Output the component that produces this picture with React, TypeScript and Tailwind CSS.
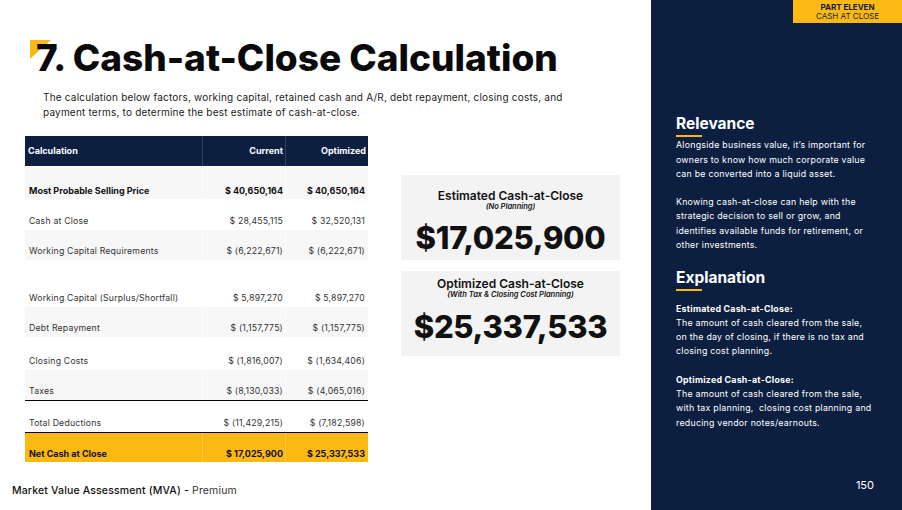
import React from "react";

const NAVY = "bg-[#0c1f40]";

type Row = {
  label: string;
  cur: string;
  opt: string;
  h: string;
  bg: "grey" | "white" | "yellow";
  bold?: boolean;
  top?: boolean;
};

const rows: Row[] = [
  { label: "Most Probable Selling Price", cur: "$ 40,650,164", opt: "$ 40,650,164", h: "h-[32px]", bg: "grey", bold: true },
  { label: "Cash at Close", cur: "$ 28,455,115", opt: "$ 32,520,131", h: "h-[31px]", bg: "white" },
  { label: "Working Capital Requirements", cur: "$ (6,222,671)", opt: "$ (6,222,671)", h: "h-[30px]", bg: "grey" },
  { label: "Working Capital (Surplus/Shortfall)", cur: "$ 5,897,270", opt: "$ 5,897,270", h: "h-[47px]", bg: "white" },
  { label: "Debt Repayment", cur: "$ (1,157,775)", opt: "$ (1,157,775)", h: "h-[30px]", bg: "grey" },
  { label: "Closing Costs", cur: "$ (1,816,007)", opt: "$ (1,634,406)", h: "h-[33px]", bg: "white" },
  { label: "Taxes", cur: "$ (8,130,033)", opt: "$ (4,065,016)", h: "h-[30px]", bg: "grey" },
  { label: "Total Deductions", cur: "$ (11,429,215)", opt: "$ (7,182,598)", h: "h-[32px]", bg: "white", top: true },
  { label: "Net Cash at Close", cur: "$ 17,025,900", opt: "$ 25,337,533", h: "h-[30px]", bg: "yellow", bold: true, top: true },
];

function TableRow({ r }: { r: Row }) {
  const bg =
    r.bg === "grey" ? "bg-[#f7f7f7]" : r.bg === "yellow" ? "bg-[#fdb913]" : "bg-white";
  const sep =
    r.bg === "yellow" ? "border-l border-[#fdc94a]" : r.bg === "grey" ? "border-l border-[#fcfcfc]" : "";
  const weight = r.bold
    ? "font-bold text-[9px] text-[#111]"
    : "font-normal text-[8.7px] tracking-[0.2px] text-[#333]";
  return (
    <div
      className={`grid grid-cols-[177px_83px_83px] ${r.h} ${bg} ${r.top ? "border-t-[1.5px] border-black" : ""} ${weight}`}
    >
      <div className="flex items-end pb-[2px] pl-[4px]">{r.label}</div>
      <div className={`flex items-end justify-end pb-[2px] pr-[2px] ${sep}`}>{r.cur}</div>
      <div className={`flex items-end justify-end pb-[2px] pr-[3px] ${sep}`}>{r.opt}</div>
    </div>
  );
}

function Card({ title, sub, value, pt, vmt }: { title: string; sub: string; value: string; pt: string; vmt: string }) {
  return (
    <div className={`w-[219px] h-[85px] bg-[#f3f3f3] flex flex-col items-center ${pt} text-[#111]`}>
      <div className="text-[12px] font-semibold leading-[13px]">{title}</div>
      <div className="text-[7.5px] font-semibold italic leading-[10px]">{sub}</div>
      <div className={`text-[31px] font-extrabold leading-[36px] ${vmt} tracking-[-0.3px]`}>{value}</div>
    </div>
  );
}

export default function App() {
  return (
    <div className="w-[902px] h-[510px] flex bg-white overflow-hidden font-['Inter',sans-serif]">
      {/* Left content */}
      <div className="w-[651px] h-full flex flex-col relative">
        <div className="relative mt-[38px] ml-[30px] h-[40px]">
          <svg className="absolute left-0 top-[2px]" width="24" height="22" viewBox="0 0 24 22">
            <polygon points="0,0 21,0 0,19" fill="#fdb913" />
          </svg>
          <h1 className="relative pl-[6px] text-[37px] leading-[40px] font-extrabold text-[#0a0a0a] tracking-[0px]">
            7. Cash-at-Close Calculation
          </h1>
        </div>
        <p className="ml-[43px] mt-[12px] text-[10px] tracking-[0.2px] leading-[15px] text-[#222] w-[600px]">
          The calculation below factors, working capital, retained cash and A/R, debt repayment, closing costs, and
          <br />
          payment terms, to determine the best estimate of cash-at-close.
        </p>
        <div className="flex mt-[16px] ml-[25px]">
          {/* Table */}
          <div className="w-[343px] flex flex-col">
            <div className={`grid grid-cols-[177px_83px_83px] h-[30px] ${NAVY} text-white text-[9px] font-bold mb-[1px]`}>
              <div className="flex items-center pl-[3px]">Calculation</div>
              <div className="flex items-center justify-end pr-[2px] border-l border-[#2c3d5e]">Current</div>
              <div className="flex items-center justify-end pr-[2px] border-l border-[#2c3d5e]">Optimized</div>
            </div>
            {rows.map((r) => (
              <TableRow key={r.label} r={r} />
            ))}
          </div>
          {/* Cards */}
          <div className="ml-[33px] mt-[39px] flex flex-col gap-[11px]">
            <Card title="Estimated Cash-at-Close" sub="(No Planning)" value="$17,025,900" pt="pt-[14px]" vmt="mt-[8px]" />
            <Card title="Optimized Cash-at-Close" sub="(With Tax & Closing Cost Planning)" value="$25,337,533" pt="pt-[6px]" vmt="mt-[9px]" />
          </div>
        </div>
        <div className="mt-auto mb-[11px] ml-[12px] text-[10.5px] tracking-[0.15px] text-[#111]">
          <span className="font-medium">Market Value Assessment (MVA) -</span>{" "}
          <span className="font-normal text-[#333]">Premium</span>
        </div>
      </div>

      {/* Right panel */}
      <div className={`w-[251px] h-full ${NAVY} flex flex-col relative`}>
        <div className="self-end w-[109px] h-[23px] bg-[#fdb913] flex flex-col items-center justify-center text-[8px] leading-[9px] text-[#0c1f40]">
          <div className="font-bold">PART ELEVEN</div>
          <div className="font-normal">CASH AT CLOSE</div>
        </div>
        <div className="pl-[25px] pr-[28px] mt-[91px] text-white">
          <h2 className="text-[15.5px] font-bold leading-[20px]">Relevance</h2>
          <div className="w-[26px] h-[2px] bg-[#fdb913] mt-[1px]" />
          <div className="text-[8.8px] tracking-[0.25px]">
            <p className="mt-[1px] leading-[14.5px]">
              Alongside business value, it’s important for owners to know how much corporate value can be converted into a liquid asset.
            </p>
            <p className="mt-[13px] leading-[14.5px]">
              Knowing cash-at-close can help with the strategic decision to sell or grow, and identifies available funds for retirement, or other investments.
            </p>
          </div>
          <h2 className="mt-[15px] text-[15.5px] font-bold leading-[20px]">Explanation</h2>
          <div className="w-[26px] h-[2px] bg-[#fdb913] mt-[1px]" />
          <div className="text-[8.8px] tracking-[0.25px]">
            <p className="mt-[11px] leading-[14.3px]">
              <span className="font-bold">Estimated Cash-at-Close:</span>
              <br />
              The amount of cash cleared from the sale, on the day of closing, if there is no tax and closing cost planning.
            </p>
            <p className="mt-[14px] leading-[14.3px]">
              <span className="font-bold">Optimized Cash-at-Close:</span>
              <br />
              The amount of cash cleared from the sale, with tax planning,&nbsp; closing cost planning and reducing vendor notes/earnouts.
            </p>
          </div>
        </div>
        <div className="absolute right-[28px] bottom-[17px] text-white text-[11px]">150</div>
      </div>
    </div>
  );
}
